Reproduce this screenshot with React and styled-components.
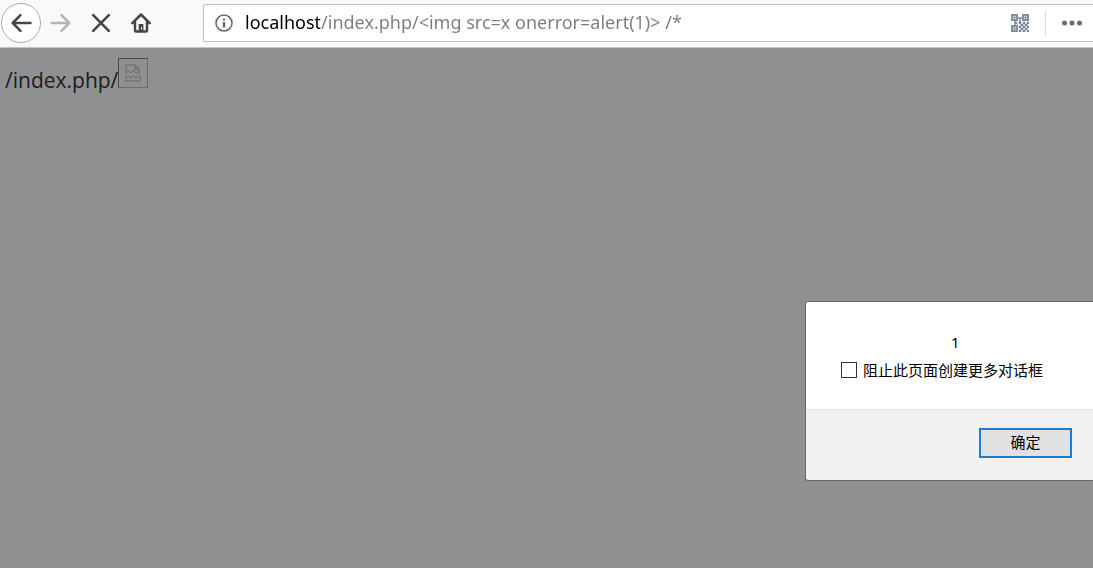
import React, { useState } from "react";
import styled, { createGlobalStyle } from "styled-components";

const GlobalStyle = createGlobalStyle`
  * { box-sizing: border-box; }
  html, body, #root { height: 100%; margin: 0; }
  body { overflow: hidden; font-family: "Noto Sans", "Noto Sans CJK SC", sans-serif; }
`;

const Browser = styled.div`
  display: flex;
  flex-direction: column;
  min-height: 100vh;
`;

const Toolbar = styled.header`
  display: flex;
  align-items: center;
  height: 48px;
  padding: 0 0 2px 1px;
  background: #f9f9fa;
  border-bottom: 1px solid #c4c4c4;
`;

const NavButton = styled.button`
  display: grid;
  place-items: center;
  width: 40px;
  height: 40px;
  padding: 0;
  border: 1px solid ${(p) => (p.$ringed ? "#acacac" : "transparent")};
  border-radius: 50%;
  background: ${(p) => (p.$ringed ? "#fff" : "transparent")};
  color: ${(p) => (p.disabled ? "#b4b4b4" : "#454545")};
`;

const AddressBar = styled.div`
  display: flex;
  align-items: center;
  flex: 1;
  height: 38px;
  margin-left: 42px;
  padding-left: 11px;
  background: #fff;
  border: 1px solid #bdbdbd;
  border-right: 0;
  border-radius: 2px 0 0 2px;
`;

const IconButton = styled.button`
  display: grid;
  place-items: center;
  padding: 0;
  border: 0;
  background: none;
  color: #6b6b6b;
`;

const AddressInput = styled.input`
  flex: 1;
  min-width: 0;
  height: 32px;
  margin-left: 12px;
  padding: 0 0 2px;
  border: 0;
  outline: 0;
  font: 18px/24px "Noto Sans", sans-serif;
  color: transparent;
  caret-color: #000;
  background: linear-gradient(to right, #000 75px, #7c7c7c 75px);
  background-clip: text;
`;

const Divider = styled.span`
  width: 1px;
  height: 26px;
  margin: 0 16px;
  background: #dcdcdc;
`;

const MenuButton = styled(IconButton)`
  margin-right: 11px;
`;

const Page = styled.main`
  flex: 1;
  display: flex;
  flex-direction: column;
  padding: 10px 0 0 5px;
  background: repeating-conic-gradient(#8c8e8f 0 25%, #929292 0 50%) 0 0 / 4px 4px;
`;

const PageText = styled.p`
  display: flex;
  align-items: flex-start;
  margin: 0;
  font: 21px/30px "Open Sans", sans-serif;
  color: #1c1c1c;
`;

const PageLabel = styled.span`
  padding-top: 7px;
`;

const BrokenImage = styled.span`
  display: grid;
  place-items: center;
  width: 30px;
  height: 30px;
  border: 1px solid #6c6c6c;
  border-top-color: #484848;
  border-left-color: #484848;
`;

const Dialog = styled.form`
  align-self: flex-end;
  width: 288px;
  margin: 206px 0 0;
  background: #f1f1f1;
  border: 1px solid #666;
  border-right: 0;
  border-radius: 3px 0 0 3px;
  font-size: 15px;
  line-height: 20px;
  color: #000;
`;

const DialogBody = styled.div`
  display: flex;
  flex-direction: column;
  height: 108px;
  padding: 30px 0 0 35px;
  background: #fff;
  border-bottom: 1px solid #e0e0e0;
  border-radius: 2px 0 0 0;
`;

const Message = styled.p`
  margin: 0 0 8px 110px;
`;

const CheckLabel = styled.label`
  display: flex;
  align-items: center;
  gap: 6px;
`;

const Checkbox = styled.input`
  appearance: none;
  width: 16px;
  height: 16px;
  margin: 0;
  border: 1px solid #333;
  background: #fff;
  &:checked { background: #333; }
`;

const DialogFooter = styled.div`
  display: flex;
  justify-content: flex-end;
  padding: 18px 21px 22px 0;
`;

const ConfirmButton = styled.button`
  width: 93px;
  height: 30px;
  padding: 0 0 2px;
  border: 2px solid #1a7bd4;
  background: #e1e1e1;
  color: #000;
  font: inherit;
`;

const stroke = { fill: "none", stroke: "currentColor", strokeLinecap: "round", strokeLinejoin: "round" };

const BackIcon = () => (
  <svg width="22" height="22" viewBox="0 0 22 22" {...stroke} strokeWidth="2.5">
    <path d="M20.500 11H3M10.500 3.200L2.700 11l7.800 7.800" />
  </svg>
);
const ForwardIcon = () => (
  <svg width="22" height="22" viewBox="0 0 22 22" {...stroke} strokeWidth="2.5">
    <path d="M1.500 11H19M11.500 3.200L19.300 11l-7.800 7.800" />
  </svg>
);
const StopIcon = () => (
  <svg width="20" height="20" viewBox="0 0 20 20" {...stroke} strokeWidth="2.6">
    <path d="M2.200 2.200l15.600 15.600M17.800 2.200L2.200 17.800" />
  </svg>
);
const HomeIcon = () => (
  <svg width="20" height="20" viewBox="0 0 20 20" {...stroke} strokeWidth="2.5">
    <path d="M1.300 10.200L10 1.500l8.700 8.700M4 9v8.600q0 1 1 1h10q1 0 1-1V9" />
    <path d="M8.200 18v-6.500h3.600V18z" fill="currentColor" strokeWidth="1.200" />
    <path d="M10.500 14.500v1.500" stroke="#f9f9fa" strokeWidth="1" />
  </svg>
);
const InfoIcon = () => (
  <svg width="18" height="18" viewBox="0 0 18 18" fill="none" stroke="currentColor">
    <circle cx="9" cy="9" r="8" strokeWidth="1.600" />
    <path d="M9 8v5.500M9 4.500v2" strokeWidth="2.400" />
  </svg>
);

const QR_FINDERS = [[0, 0], [11, 0], [0, 11]];
const QR_DOTS = [
  [4, 8], [8, 8], [12, 8], [16, 8],
  [10, 10], [14, 10],
  [8, 12], [12, 12], [16, 12],
  [10, 14], [14, 14],
  [8, 16], [12, 16], [16, 16],
];
const QrIcon = () => (
  <svg width="18" height="18" viewBox="0 0 18 18" fill="none" stroke="#84909b">
    {QR_FINDERS.map(([x, y]) => (
      <g key={`${x}-${y}`}>
        <rect x={x + 1} y={y + 1} width="5" height="5" strokeWidth="2" />
        <rect x={x + 2.5} y={y + 2.5} width="2" height="2" fill="#5f6d79" stroke="none" />
      </g>
    ))}
    <path d="M7 4h4M4 7v4M9 4v4" strokeWidth="1.600" />
    {QR_DOTS.map(([x, y]) => (
      <rect key={`${x}-${y}`} x={x} y={y} width="2" height="2" fill="#6c7883" stroke="#8d98a2" strokeWidth="0.5" />
    ))}
  </svg>
);
const MoreIcon = () => (
  <svg width="20" height="6" viewBox="0 0 20 6" fill="currentColor">
    <circle cx="2.500" cy="3" r="2.500" />
    <circle cx="10" cy="3" r="2.500" />
    <circle cx="17.500" cy="3" r="2.500" />
  </svg>
);
const BrokenIcon = () => (
  <svg width="16" height="18" viewBox="0 0 16 18" fill="none" stroke="#747474" strokeWidth="1.300">
    <path d="M1 10V1h9l4 4v5M10 1v4h4M1 9l3-2 2 2 3-3 2 3 3-1" />
    <path d="M1 17v-4l3-1 2 2 3-2 2 2 4-2v5z" />
  </svg>
);

export default function App() {
  const [url, setUrl] = useState("localhost/index.php/<img src=x onerror=alert(1)> /*");
  return (
    <Browser>
      <GlobalStyle />
      <Toolbar>
        <NavButton $ringed aria-label="后退"><BackIcon /></NavButton>
        <NavButton disabled aria-label="前进"><ForwardIcon /></NavButton>
        <NavButton aria-label="停止"><StopIcon /></NavButton>
        <NavButton aria-label="主页"><HomeIcon /></NavButton>
        <AddressBar>
          <IconButton aria-label="网站信息"><InfoIcon /></IconButton>
          <AddressInput aria-label="地址" value={url} spellCheck={false} onChange={(e) => setUrl(e.target.value)} />
          <IconButton aria-label="二维码"><QrIcon /></IconButton>
          <Divider />
          <MenuButton aria-label="更多"><MoreIcon /></MenuButton>
        </AddressBar>
      </Toolbar>
      <Page>
        <PageText>
          <PageLabel>/index.php/</PageLabel>
          <BrokenImage><BrokenIcon /></BrokenImage>
        </PageText>
        <Dialog role="alertdialog" aria-label="1" onSubmit={(e) => e.preventDefault()}>
          <DialogBody>
            <Message>1</Message>
            <CheckLabel><Checkbox type="checkbox" />阻止此页面创建更多对话框</CheckLabel>
          </DialogBody>
          <DialogFooter><ConfirmButton type="submit">确定</ConfirmButton></DialogFooter>
        </Dialog>
      </Page>
    </Browser>
  );
}
